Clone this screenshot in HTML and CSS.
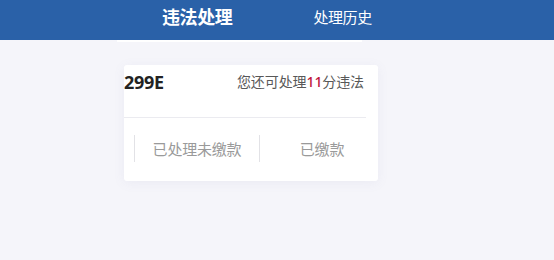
FILE: index.html
```html
<!DOCTYPE html>
<html lang="zh-CN">
<head>
<meta charset="utf-8">
<link rel="stylesheet" href="styles.css">
</head>
<body>
<header class="topbar">
  <span class="tab-title">违法处理</span>
  <span class="tab-link">处理历史</span>
</header>
<div class="tab-underline"></div>
<section class="card">
  <div class="card-top">
    <span class="plate">299E</span>
    <span class="quota">您还可处理<em class="num">11</em>分违法</span>
  </div>
  <div class="card-divider"></div>
  <div class="card-tabs">
    <div class="status">已处理未缴款</div>
    <div class="status">已缴款</div>
  </div>
</section>
</body>
</html>
```
FILE: styles.css
```css
html, body {
  margin: 0;
  padding: 0;
}
body {
  background: #f5f5fa;
  font-family: "Noto Sans", "Noto Sans CJK SC", sans-serif;
  width: 554px;
  height: 260px;
  overflow: hidden;
}
.topbar {
  height: 40px;
  background: #2a61a8;
  display: flex;
  align-items: center;
  padding-left: 162px;
  box-sizing: border-box;
  color: #fff;
}
.tab-title {
  font-size: 18px;
  font-weight: 700;
  letter-spacing: -0.4px;
  line-height: 20px;
  margin-top: -6px;
}
.tab-link {
  font-size: 15px;
  line-height: 20px;
  margin-left: 81px;
  margin-top: -6px;
  letter-spacing: -0.4px;
}
.tab-underline {
  width: 245px;
  height: 2px;
  margin-left: 117px;
  background: #ffffff;
}
.card {
  margin-top: 23px;
  margin-left: 124px;
  width: 254px;
  height: 116px;
  background: #ffffff;
  border-radius: 3px;
  box-shadow: 0 2px 12px rgba(120, 120, 170, 0.08);
}
.card-top {
  height: 52px;
  display: flex;
  justify-content: space-between;
  align-items: flex-start;
  padding-right: 14px;
  padding-top: 6px;
  box-sizing: border-box;
}
.plate {
  font-size: 18px;
  font-weight: 700;
  color: #222;
  line-height: 22px;
  letter-spacing: -0.3px;
}
.quota {
  font-size: 14px;
  color: #585858;
  line-height: 22px;
  letter-spacing: -0.1px;
}
.num {
  font-style: normal;
  color: #c0163a;
  font-weight: 500;
}
.card-divider {
  height: 1px;
  background: #ebebf0;
  margin-right: 12px;
}
.card-tabs {
  display: flex;
  padding-left: 10px;
  padding-top: 17px;
}
.status {
  width: 125px;
  flex: none;
  height: 27px;
  border-left: 1px solid #e2e2e6;
  box-sizing: border-box;
  display: flex;
  align-items: center;
  justify-content: center;
  font-size: 15px;
  color: #9a9a9a;
  letter-spacing: -0.2px;
}
```
